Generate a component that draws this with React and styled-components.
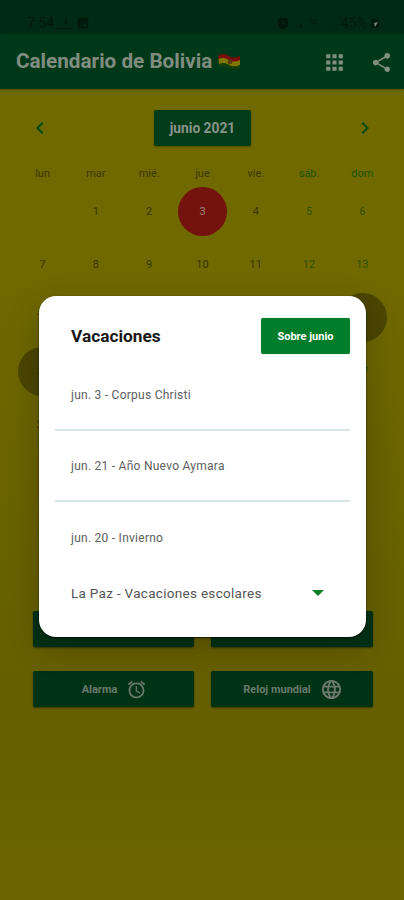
import React from "react";
import styled, { createGlobalStyle } from "styled-components";
import {
  MdApps,
  MdShare,
  MdAlarm,
  MdLanguage,
  MdChevronLeft,
  MdChevronRight,
  MdImage,
} from "react-icons/md";

const GlobalStyle = createGlobalStyle`
  * {
    box-sizing: border-box;
  }
  body {
    margin: 0;
    background: #706900;
    font-family: Roboto, "Liberation Sans", sans-serif;
  }
`;

const Screen = styled.div`
  position: relative;
  width: 404px;
  height: 900px;
  overflow: hidden;
  background: linear-gradient(#706900 0 280px, #6b6400 430px, #655f00 700px, #6b6400 900px);
`;

const StatusBar = styled.div`
  display: flex;
  align-items: flex-end;
  justify-content: space-between;
  height: 34px;
  padding: 0 24px 3px 27px;
  background: #002a14;
  color: #00180b;
  font-size: 14px;
`;

const StatusGroup = styled.div`
  display: flex;
  align-items: center;
  gap: ${(props) => props.$gap}px;
  height: 16px;
`;

const Header = styled.header`
  display: flex;
  align-items: center;
  height: 55px;
  padding: 1px 11px 0 16px;
  background: #003919;
  color: #818d80;
  box-shadow: 0 1px 2px #4e5100;
`;

const Title = styled.h1`
  margin: -2px 5px 0 0;
  font-size: 20.7px;
  font-weight: 700;
  white-space: nowrap;
`;

const HeaderIcons = styled.div`
  display: flex;
  align-items: center;
  gap: 23px;
  margin-left: auto;
`;

const MonthNav = styled.div`
  display: flex;
  align-items: center;
  justify-content: space-between;
  margin: 21px 27px 0 28px;
  height: 36px;
  color: #004d16;
`;

const MonthButton = styled.button`
  width: 97px;
  height: 36px;
  padding: 0;
  border: none;
  border-radius: 2px;
  background: #003b1a;
  color: #89938a;
  box-shadow: 0 1px 2px #4a4c00;
  font: 700 13.8px Roboto, sans-serif;
`;

const Grid = styled.div`
  display: grid;
  grid-template-columns: repeat(7, 53.3px);
  justify-content: center;
  margin-left: 1px;
`;

const WeekDay = styled.div`
  height: 38.5px;
  padding-top: 21px;
  text-align: center;
  font-size: 11px;
  line-height: 14px;
  color: ${(props) => (props.$weekend ? "#1b5306" : "#3d3700")};
`;

const DayCell = styled.div`
  display: flex;
  align-items: center;
  justify-content: center;
  height: 53.3px;
`;

const markColors = { today: "#74130d", holiday: "#4b4600" };

const Day = styled.span`
  display: flex;
  align-items: center;
  justify-content: center;
  width: 49px;
  height: 49px;
  border-radius: 50%;
  font-size: 11px;
  background: ${(props) => markColors[props.$mark] || "transparent"};
  color: ${(props) =>
    props.$mark === "today" ? "#9a817c" : props.$weekend ? "#304f03" : "#3a3500"};
`;

const Actions = styled.div`
  display: grid;
  grid-template-columns: 161px 162px;
  justify-content: center;
  gap: 24px 17px;
  margin: 160.5px 0 0 2px;
`;

const ActionButton = styled.button`
  display: flex;
  align-items: center;
  justify-content: center;
  gap: 9px;
  height: 36px;
  padding: 0 0 0 2px;
  border: none;
  border-radius: 2px;
  background: #003216;
  color: #6c7a6d;
  box-shadow: 0 1px 2px #363900;
  font: 700 11px Roboto, sans-serif;
`;

const Overlay = styled.div`
  position: absolute;
  inset: 0;
  display: flex;
  align-items: flex-start;
  padding: 296px 38px 0 39px;
`;

const Dialog = styled.section`
  width: 100%;
  height: 341px;
  padding: 22px 16px 0;
  border-radius: 17px;
  background: #fff;
  box-shadow: 0 1px 2px rgba(0, 0, 0, 0.7), 0 10px 32px rgba(0, 0, 0, 0.22);
`;

const DialogHeader = styled.div`
  display: flex;
  align-items: center;
  justify-content: space-between;
  height: 36px;
  margin-bottom: 6px;
  padding-left: 16px;
`;

const DialogTitle = styled.h2`
  margin: 0;
  font-size: 17.3px;
  font-weight: 700;
  color: #181818;
`;

const AboutButton = styled.button`
  width: 89px;
  height: 36px;
  padding: 0;
  border: none;
  border-radius: 2px;
  background: #007d2a;
  color: #fff;
  box-shadow: 0 0 1px #5db078;
  font: 700 11px Roboto, sans-serif;
`;

const Holiday = styled.div`
  display: flex;
  align-items: center;
  height: 71px;
  padding-left: 16px;
  border-bottom: ${(props) => (props.$last ? "none" : "2px solid #d9e6e6")};
  font-size: 12px;
  letter-spacing: 0.26px;
  color: #606060;
`;

const RegionSelect = styled.div`
  display: flex;
  align-items: center;
  justify-content: space-between;
  height: 40px;
  padding: 0 26px 0 16px;
  font-size: 13.5px;
  letter-spacing: 0.3px;
  color: #555;
`;

const Caret = styled.span`
  border: 6px solid transparent;
  border-top-color: #0b7f25;
  border-bottom: none;
`;

const weekDays = ["lun", "mar", "mié.", "jue", "vie.", "sáb.", "dom"];
const days = [null, ...Array.from({ length: 30 }, (_, i) => i + 1)];
const marks = { 3: "today", 20: "holiday", 21: "holiday" };
const holidays = ["jun. 3 - Corpus Christi", "jun. 21 - Año Nuevo Aymara", "jun. 20 - Invierno"];

const Flag = () => (
  <svg width="24" height="18" viewBox="0 0 24 18">
    <path d="M1 3C5 0 9 1 12 3s7 2 11 0v5c-4 2-8 2-11 0S5 5 2 7z" fill="#790e09" />
    <path d="M1.5 6C5 4 9 5 12 7s7 2 11 0v5c-4 2-8 2-11 0s-7-2-10 0z" fill="#827800" />
    <path d="M2 11c3-2 7-1 10 1s7 2 11 0v3c-4 2-8 2-11 0s-6-2-9-1z" fill="#183d0c" />
    <circle cx="13" cy="9" r="2.4" fill="#593d0a" />
  </svg>
);

const App = () => {
  return (
    <Screen>
      <GlobalStyle />
      <StatusBar>
        <StatusGroup $gap={5}>
          <span>7:54</span>
          <svg width="12" height="13" viewBox="0 0 12 13" fill="none" stroke="currentColor">
            <path d="M0 11.5h12M7 1v6M5 5l2 2 2-2" />
          </svg>
          <MdImage size={14} />
        </StatusGroup>
        <StatusGroup $gap={4}>
          <svg width="12" height="13" viewBox="0 0 12 13">
            <path d="M1 2l3-1h4l3 1v7L8 12H4L1 9z" fill="currentColor" />
            <path d="M6 4v3h3" fill="none" stroke="#002a14" />
          </svg>
          <svg width="44" height="13" viewBox="0 0 44 13" fill="none" stroke="currentColor">
            <path d="M5 11V9M8 11V7M16 3h10M18 6h6M18 10h2M23 10h2M37 7v3" />
          </svg>
          <span>45%</span>
          <svg width="9" height="13" viewBox="0 0 9 13">
            <rect x="0" y="2" width="8" height="9" fill="#00180b" />
            <path d="M3 6l4-1-3 5z" fill="#7c877e" />
          </svg>
        </StatusGroup>
      </StatusBar>
      <Header>
        <Title>Calendario de Bolivia</Title>
        <Flag />
        <HeaderIcons>
          <MdApps size={25} />
          <MdShare size={23} />
        </HeaderIcons>
      </Header>
      <MonthNav>
        <MdChevronLeft size={24} />
        <MonthButton>junio 2021</MonthButton>
        <MdChevronRight size={24} />
      </MonthNav>
      <Grid>
        {weekDays.map((name, i) => (
          <WeekDay key={name} $weekend={i > 4}>
            {name}
          </WeekDay>
        ))}
        {days.map((day, i) => (
          <DayCell key={i}>
            <Day $mark={marks[day]} $weekend={i % 7 > 4}>
              {day}
            </Day>
          </DayCell>
        ))}
      </Grid>
      <Actions>
        <ActionButton />
        <ActionButton />
        <ActionButton>
          Alarma
          <MdAlarm size={21} />
        </ActionButton>
        <ActionButton>
          Reloj mundial
          <MdLanguage size={23} />
        </ActionButton>
      </Actions>
      <Overlay>
        <Dialog>
          <DialogHeader>
            <DialogTitle>Vacaciones</DialogTitle>
            <AboutButton>Sobre junio</AboutButton>
          </DialogHeader>
          {holidays.map((text, i) => (
            <Holiday key={text} $last={i === 2}>
              {text}
            </Holiday>
          ))}
          <RegionSelect>
            La Paz - Vacaciones escolares
            <Caret />
          </RegionSelect>
        </Dialog>
      </Overlay>
    </Screen>
  );
};

export default App;
